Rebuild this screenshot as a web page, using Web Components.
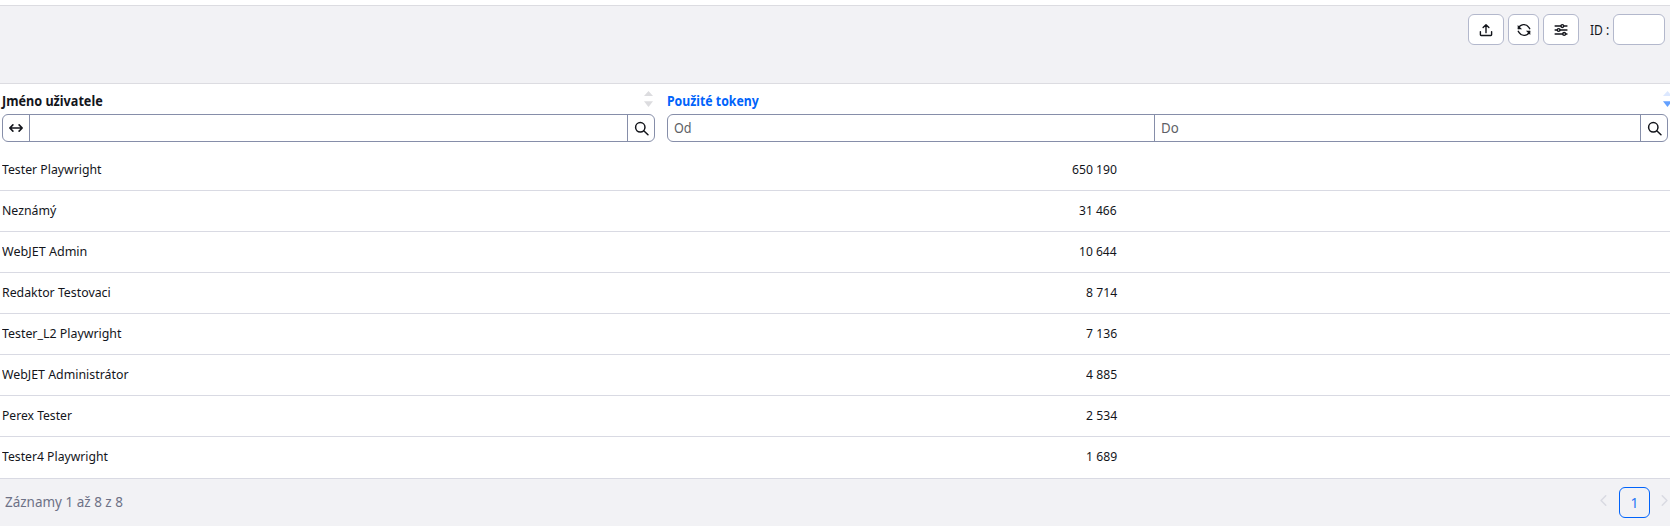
<!DOCTYPE html>
<html lang="cs"><head><meta charset="utf-8"><title>Tokeny</title>
<style>html,body{margin:0;height:531px;overflow:hidden;background:#fff}</style></head><body>
<token-page></token-page>
<script>
const define = (name, css, html, ready) => customElements.define(name, class extends HTMLElement {
  connectedCallback() {
    if (this.shadowRoot) return;
    this.attachShadow({mode:'open'}).innerHTML = `<style>*{box-sizing:border-box}${css}</style>${html}`;
    if (ready) ready(this, this.shadowRoot);
  }
});
// Single-line label condensed to the width given in its w attribute.
define('fit-text', ':host{display:inline-block;white-space:nowrap;flex:none}span{display:inline-block;transform-origin:0 50%}',
  '<span><slot></slot></span>', (el, root) => {
    const w = +el.getAttribute('w'), s = root.querySelector('span');
    el.style.width = w + 'px';
    s.style.transform = `scaleX(${w / s.offsetWidth})`;
  });
const icons = {
  upload:'<path d="M8 11V2M4.7 5.2 8 1.9l3.3 3.3M1.6 9.8v3.6q0 .8.8.8h11.2q.8 0 .8-.8V9.8"/>',
  refresh:'<path d="M1.7 6.2A6.5 6.5 0 0 1 13.3 4.8L14.5 6.5M14.3 9.8A6.5 6.5 0 0 1 2.7 11.2L1.5 9.5"/><path fill="currentColor" stroke="none" d="M.8 2.2v5h5zM15.2 13.8v-5h-5z"/>',
  sliders:'<path d="M1.3 3.5h6.5M11.2 3.5h3.6M1.3 8h2.3M7 8h7.8M1.3 12.5h8.6M13.3 12.5h1.5"/><circle cx="9.5" cy="3.5" r="1.6"/><circle cx="5.3" cy="8" r="1.6"/><circle cx="11.6" cy="12.5" r="1.6"/>',
  search:'<circle cx="6.7" cy="6.7" r="5"/><path d="m10.4 10.4 4.5 4.3"/>',
  width:'<path d="M1.8 8h12.4M4.9 4.9 1.8 8l3.1 3.1M11.1 4.9 14.2 8l-3.1 3.1"/>',
  left:'<path d="M10.4 3 5.4 8l5 5"/>', right:'<path d="M5.6 3l5 5-5 5"/>'
};
define('ui-icon', ':host{display:block;flex:none;width:var(--s,14px);height:var(--s,14px)}svg{display:block;width:100%;height:100%;fill:none;stroke:currentColor;stroke-width:1.6;stroke-linecap:round;stroke-linejoin:round}',
  '<svg viewBox="0 0 16 16"></svg>', (el, root) => root.querySelector('svg').innerHTML = icons[el.getAttribute('name')]);
define('tool-button', ':host{display:flex;align-items:center;justify-content:center;width:36px;height:31px;background:#fff;border:1px solid #b3b8cc;border-radius:6px;box-sizing:border-box}', '<slot></slot>');
define('sort-marks', ':host{display:block;width:9px;height:16px;color:#dcdcdf;flex:none}:host([active]){color:#63a0ff}:host([active]) .u{fill:#dce8ff}svg{display:block}',
  '<svg width="9" height="16"><path class="u" fill="currentColor" d="M0 5 4.5 0 9 5z"/><path fill="currentColor" d="M0 10.2h9L4.5 16z"/></svg>');
define('filter-group', ':host{display:flex;height:28px;border:1px solid #868ea9;border-radius:6px;background:#fff;overflow:hidden;box-sizing:border-box}::slotted(*){display:flex;align-items:center;box-sizing:border-box}::slotted(:not(:first-child)){border-left:1px solid #868ea9}::slotted(.field){flex:1 1 0;padding-left:6px;color:#5d5f66;font-size:14px}::slotted(.cell){width:27px;justify-content:center}::slotted(.first){width:26px}', '<slot></slot>');
define('column-header', ':host{display:flex;flex-direction:column;height:66px;padding-top:7px;box-sizing:border-box}.t{height:16px;display:flex;justify-content:space-between;font:bold 14px/20px "Noto Sans",sans-serif;margin-bottom:7px}::slotted(fit-text){height:20px}',
  '<div class="t"><slot name="title"></slot><slot name="sort"></slot></div><slot></slot>');
define('data-row', ':host{display:grid;grid-template-columns:665px 452px;height:41px;line-height:38px;font-size:13px;border-bottom:1px solid #d9dae3;box-sizing:border-box;align-items:start}:host(:last-of-type){height:42px}.a{padding-left:2px}.b{text-align:right}',
  '<div class="a"><slot></slot></div><div class="b"><slot name="n"></slot></div>');
const rows = [['Tester Playwright',99,'650 190',45],['Neznámý',54,'31 466',38],['WebJET Admin',85,'10 644',38],['Redaktor Testovaci',109,'8 714',31],['Tester_L2 Playwright',119,'7 136',31],['WebJET Administrátor',126.5,'4 885',31],['Perex Tester',70,'2 534',31],['Tester4 Playwright',106,'1 689',31]];
define('token-page', `:host{display:flex;flex-direction:column;width:1670px;height:531px;padding-top:5px;box-sizing:border-box;overflow:hidden;color:#13151b;font:14px/20px "Noto Sans",sans-serif}
header{height:79px;background:#f2f2f5;border:solid #dcdce1;border-width:1px 0;display:flex;justify-content:flex-end;align-items:flex-start;gap:4px;padding:8px 5px 0 0}
.id{line-height:32px;margin:0 0 0 7px}.box{width:52px;height:31px;background:#fff;border:1px solid #b3b8cc;border-radius:6px}
.heads{display:grid;grid-template-columns:653px 1001px;column-gap:12px;padding-left:2px;height:66px;flex:none}
.blue{color:#0063fb}.last{margin-right:-4px}
footer{height:47px;background:#f2f2f5;display:flex;align-items:flex-start;padding:8px 2px 0 5px;color:#6d7186;line-height:30px}
nav{margin-left:auto;display:flex;align-items:center;color:#d9dae2}
.page{width:31px;height:31px;margin:0 7px 0 8px;border:1px solid #0063fb;border-radius:6px;color:#2878f5;display:flex;align-items:center;justify-content:center}`,
`<header><tool-button><ui-icon name="upload"></ui-icon></tool-button><tool-button style="width:31px"><ui-icon name="refresh"></ui-icon></tool-button><tool-button><ui-icon name="sliders"></ui-icon></tool-button><fit-text class="id" w="19">ID :</fit-text><div class="box"></div></header>
<div class="heads"><column-header><fit-text slot="title" w="101">Jméno uživatele</fit-text><sort-marks slot="sort" style="margin-right:2px"></sort-marks>
<filter-group><span class="cell first"><ui-icon name="width" style="--s:16px"></ui-icon></span><span class="field"></span><span class="cell"><ui-icon name="search" style="--s:15px"></ui-icon></span></filter-group></column-header>
<column-header><fit-text class="blue" slot="title" w="92">Použité tokeny</fit-text><sort-marks active class="last" slot="sort"></sort-marks>
<filter-group><span class="field"><fit-text w="18">Od</fit-text></span><span class="field"><fit-text w="18">Do</fit-text></span><span class="cell"><ui-icon name="search" style="--s:15px"></ui-icon></span></filter-group></column-header></div>
<main>${rows.map(r=>`<data-row><fit-text w="${r[1]}">${r[0]}</fit-text><fit-text slot="n" w="${r[3]}">${r[2]}</fit-text></data-row>`).join('')}</main>
<footer><fit-text w="117.5">Záznamy 1 až 8 z 8</fit-text><nav><ui-icon name="left" style="--s:15px;margin-top:-5px"></ui-icon><span class="page">1</span><ui-icon name="right" style="--s:15px;margin-top:-5px;margin-right:-4px"></ui-icon></nav></footer>`);
</script></body></html>
